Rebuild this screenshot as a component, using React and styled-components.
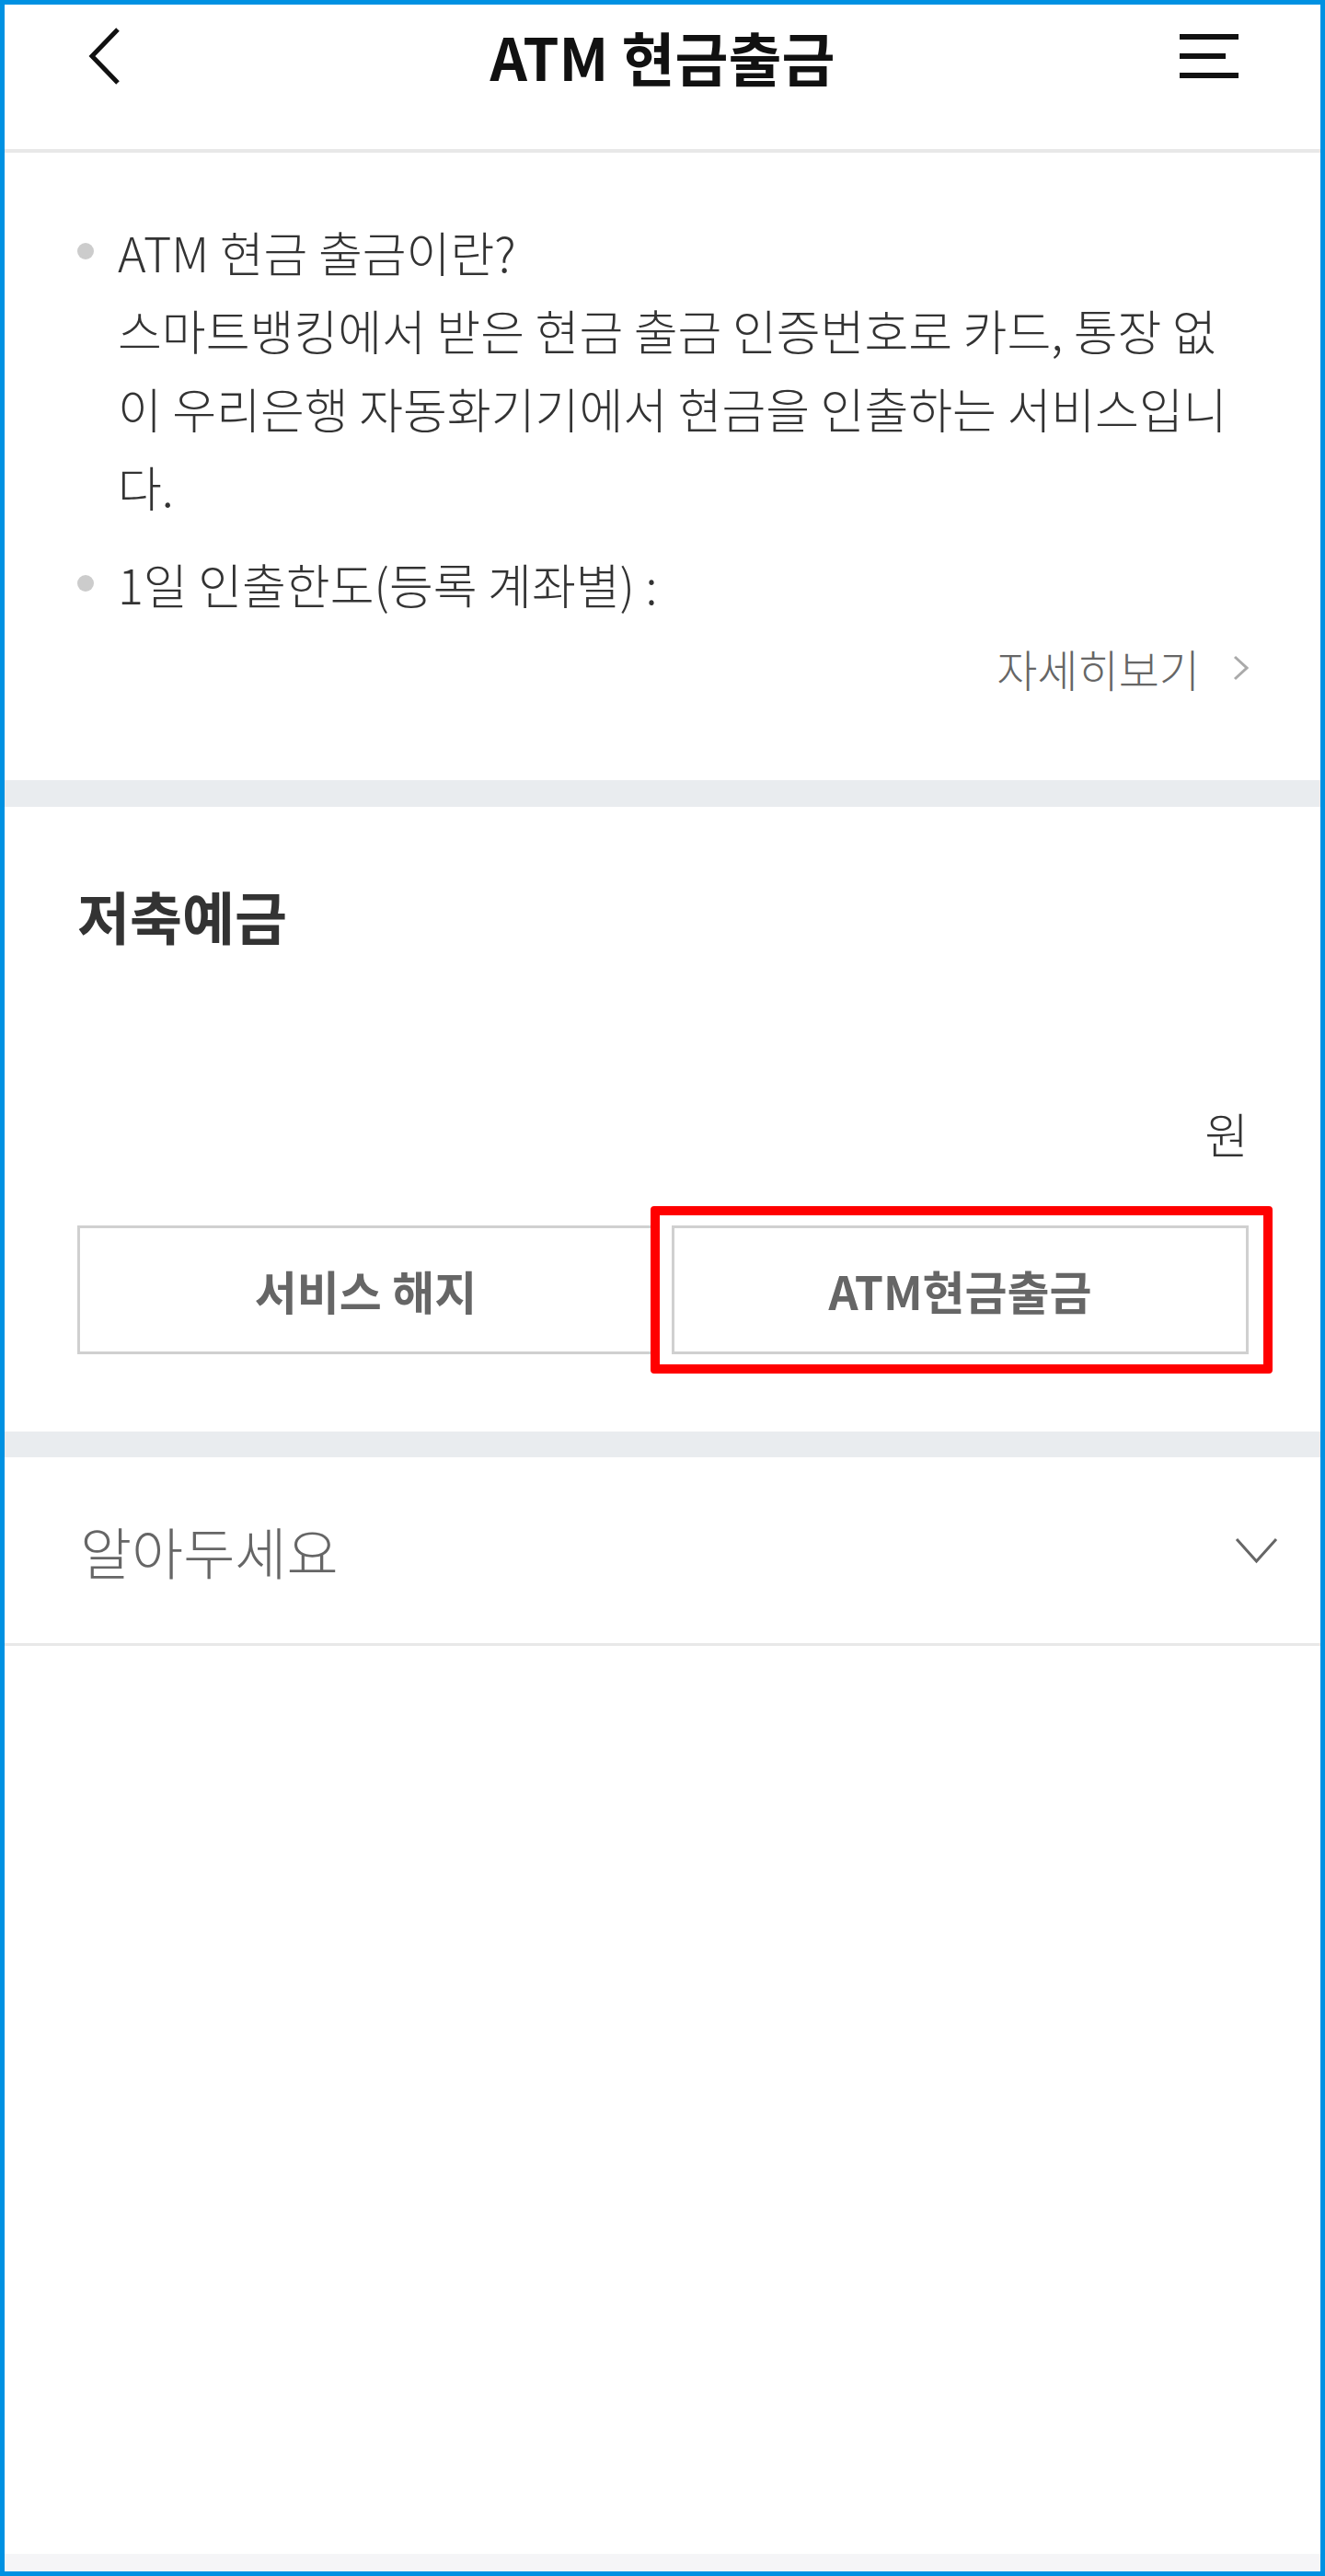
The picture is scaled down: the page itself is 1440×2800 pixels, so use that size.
import React from "react";
import styled, { createGlobalStyle, css } from "styled-components";

const GlobalStyle = createGlobalStyle`
  html, body {
    margin: 0;
    padding: 0;
    background: #fff;
  }
  body {
    font-family: "Noto Sans CJK KR", "Noto Sans", sans-serif;
  }
`;

export default function App() {
  return (
    <>
      <GlobalStyle />
      <Frame>
        <Header>
          <IconButton aria-label="back">
            <svg width="40" height="64" viewBox="0 0 40 64">
              <path d="M34 3 L6 32 L34 61" fill="none" stroke="#111" strokeWidth="5" />
            </svg>
          </IconButton>
          <Title>ATM 현금출금</Title>
          <IconButton aria-label="menu" $end>
            <svg width="64" height="48" viewBox="0 0 64 48">
              <rect x="0" y="0" width="64" height="6" fill="#111" />
              <rect x="0" y="21" width="50" height="6" fill="#111" />
              <rect x="0" y="42" width="64" height="6" fill="#111" />
            </svg>
          </IconButton>
        </Header>

        <InfoSection>
          <BulletList>
            <BulletItem>
              <Dot />
              <span>
                ATM 현금 출금이란?
                <br />
                스마트뱅킹에서 받은 현금 출금 인증번호로 카드, 통장 없이 우리은행 자동화기기에서 현금을 인출하는 서비스입니다.
              </span>
            </BulletItem>
            <BulletItem>
              <Dot />
              <span>1일 인출한도(등록 계좌별) :</span>
            </BulletItem>
          </BulletList>
          <MoreLink>
            자세히보기
            <svg width="17" height="28" viewBox="0 0 17 28">
              <path d="M2 2 L15 14 L2 26" fill="none" stroke="#aaa" strokeWidth="3" />
            </svg>
          </MoreLink>
        </InfoSection>

        <Band $h={29} />

        <AccountSection>
          <AccountTitle>저축예금</AccountTitle>
          <Balance>원</Balance>
          <ButtonRow>
            <ActionButton>서비스 해지</ActionButton>
            <ActionButton $highlight>ATM현금출금</ActionButton>
          </ButtonRow>
        </AccountSection>

        <Band $h={28} />

        <Accordion>
          <AccordionLabel>알아두세요</AccordionLabel>
          <svg width="47" height="29" viewBox="0 0 47 29">
            <path d="M2 2 L23.5 26 L45 2" fill="none" stroke="#666" strokeWidth="3" />
          </svg>
        </Accordion>

        <Spacer />
        <BottomStrip />
      </Frame>
    </>
  );
}

const Frame = styled.div`
  box-sizing: border-box;
  width: 1440px;
  height: 2800px;
  border: 5px solid #0091e2;
  display: flex;
  flex-direction: column;
  background: #fff;
`;

const Header = styled.header`
  height: 112px;
  padding: 0 89px 45px;
  border-bottom: 4px solid #e8e8e8;
  display: grid;
  grid-template-columns: 1fr auto 1fr;
  align-items: center;
`;

const IconButton = styled.div`
  display: flex;
  justify-self: ${(p) => (p.$end ? "end" : "start")};
`;

const Title = styled.h1`
  margin: 0;
  font-size: 63px;
  font-weight: 700;
  color: #111;
  line-height: 80px;
  white-space: nowrap;
`;

const InfoSection = styled.section`
  padding: 65px 78px 92px 79px;
`;

const BulletList = styled.ul`
  margin: 0;
  padding: 0;
  list-style: none;
  display: flex;
  flex-direction: column;
  gap: 21px;
`;

const BulletItem = styled.li`
  display: flex;
  gap: 26px;
  font-size: 52px;
  font-weight: 300;
  line-height: 85px;
  color: #333;
  word-break: break-all;
`;

const Dot = styled.i`
  flex: none;
  width: 18px;
  height: 18px;
  margin-top: 33px;
  border-radius: 50%;
  background: #cccccc;
`;

const MoreLink = styled.div`
  margin-top: 19px;
  display: flex;
  justify-content: flex-end;
  align-items: center;
  gap: 36px;
  font-size: 48px;
  font-weight: 300;
  line-height: 60px;
  color: #666;
`;

const Band = styled.div`
  height: ${(p) => p.$h}px;
  background: #e9ecef;
`;

const AccountSection = styled.section`
  padding: 78px 78px 84px 79px;
`;

const AccountTitle = styled.h2`
  margin: 0;
  font-size: 62px;
  font-weight: 700;
  line-height: 80px;
  color: #333;
`;

const Balance = styled.div`
  margin-top: 167px;
  text-align: right;
  font-size: 52px;
  font-weight: 300;
  line-height: 60px;
  color: #333;
`;

const ButtonRow = styled.div`
  margin-top: 70px;
  display: grid;
  grid-template-columns: 1fr 1fr;
  column-gap: 19px;
`;

const ActionButton = styled.button`
  position: relative;
  height: 140px;
  box-sizing: border-box;
  border: 3px solid #d0d0d0;
  background: #fff;
  font-family: inherit;
  font-size: 50px;
  font-weight: 700;
  color: #666;
  padding: 0;
  ${(p) =>
    p.$highlight &&
    css`
      &::after {
        content: "";
        position: absolute;
        left: -26px;
        right: -29px;
        top: -24px;
        bottom: -24px;
        border: 10px solid #ff0000;
        border-radius: 4px;
        pointer-events: none;
      }
    `}
`;

const Accordion = styled.div`
  height: 202px;
  padding: 0 46px 0 82px;
  border-bottom: 3px solid #e8e8e8;
  display: flex;
  align-items: center;
  justify-content: space-between;
`;

const AccordionLabel = styled.span`
  font-size: 61px;
  font-weight: 300;
  color: #666;
`;

const Spacer = styled.div`
  flex: 1;
`;

const BottomStrip = styled.div`
  height: 19px;
  background: #f5f5f7;
`;
